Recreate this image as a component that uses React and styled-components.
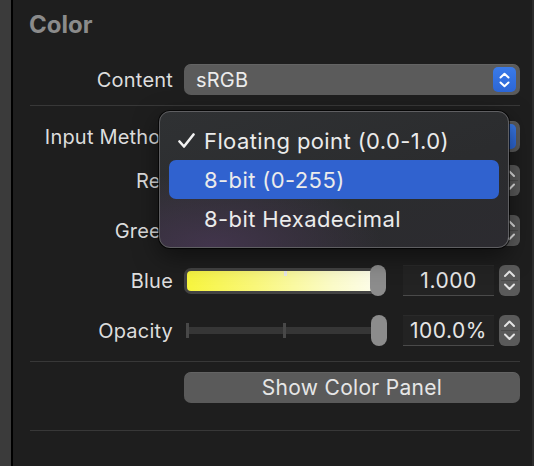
import React from "react";
import styled, { createGlobalStyle } from "styled-components";

const Global = createGlobalStyle`
  html, body { margin: 0; padding: 0; background: #1e1e1e; }
  body { font-family: Inter, "Noto Sans", "Liberation Sans", sans-serif; -webkit-font-smoothing: antialiased; }
`;

const Frame = styled.div`
  display: flex;
  width: 534px;
  height: 466px;
  overflow: hidden;
`;

const Sidebar = styled.div`
  width: 11px;
  background: #3b3b3b;
  flex: none;
`;

const Edge = styled.div`
  width: 2px;
  background: #000;
  flex: none;
`;

const Inspector = styled.div`
  position: relative;
  flex: 1;
  background: #1e1e1e;
  padding: 11px 12px 0 17px;
  border-right: 2px solid #2c2c2c;
  display: flex;
  flex-direction: column;
`;

const Heading = styled.div`
  font-size: 24px;
  line-height: 28px;
  font-weight: 700;
  color: #8b8b8b;
  margin-left: -1px;
  margin-bottom: 25px;
`;

const Row = styled.div`
  display: grid;
  grid-template-columns: 143px 1fr;
  column-gap: 11px;
  align-items: center;
  height: 31px;
  margin-top: ${(p) => p.$mt || 0}px;
`;

const Label = styled.div`
  text-align: right;
  font-size: 20px;
  letter-spacing: 0.2px;
  color: #dddddd;
  white-space: nowrap;
`;

const Popup = styled.div`
  position: relative;
  height: 31px;
  border-radius: 7px;
  background: #5b5b5b;
  box-shadow: inset 0 0.5px 0 rgba(255,255,255,0.12);
  display: flex;
  align-items: center;
  padding-left: 12px;
  font-size: 20px;
  letter-spacing: 0.2px;
  color: #ececec;
`;

const PopupArrows = styled.div`
  position: absolute;
  right: 4px;
  top: 3px;
  width: 23px;
  height: 25px;
  border-radius: 5px;
  background: linear-gradient(#3a7bea, #2c66d6);
  display: flex;
  align-items: center;
  justify-content: center;
`;

const Separator = styled.div`
  height: 1px;
  background: #383838;
  margin-top: ${(p) => p.$mt}px;
`;

const Controls = styled.div`
  display: flex;
  align-items: center;
  gap: 5px;
`;

const SliderArea = styled.div`
  position: relative;
  flex: 1;
  height: 31px;
  margin-right: 12px;
  display: flex;
  align-items: center;
`;

const ColorTrack = styled.div`
  width: calc(100% - 8px);
  height: 20px;
  border: 3px solid #434343;
  border-radius: 7px;
  background: ${(p) => p.$bg};
  position: relative;
`;

const CenterMark = styled.div`
  position: absolute;
  left: 50%;
  top: 0;
  width: 3px;
  height: 5px;
  background: #e8e8e8;
`;

const PlainTrack = styled.div`
  position: relative;
  width: calc(100% - 6px);
  height: 7px;
  background: #363636;
  margin-left: 2px;
`;

const Tick = styled.div`
  position: absolute;
  top: -4px;
  left: ${(p) => p.$left};
  width: 3px;
  height: 15px;
  background: #484848;
`;

const Knob = styled.div`
  position: absolute;
  right: ${(p) => p.$right || 0}px;
  top: 0;
  width: 16px;
  height: 31px;
  border-radius: 8px;
  background: #8c8c8c;
`;

const Field = styled.div`
  width: 91px;
  height: 31px;
  box-sizing: border-box;
  background: #232323;
  border-top: 1px solid #2a2a2a;
  border-bottom: 1px solid #4a4a4a;
  display: flex;
  align-items: center;
  justify-content: center;
  font-size: 21px;
  letter-spacing: 0.5px;
  color: #e6e6e6;
`;

const Stepper = styled.div`
  width: 21px;
  height: 31px;
  border-radius: 6px;
  background: #5a5a5a;
  display: flex;
  flex-direction: column;
  align-items: center;
  justify-content: space-evenly;
  position: relative;
  &::after {
    content: "";
    position: absolute;
    left: 2px;
    right: 2px;
    top: 15px;
    height: 1px;
    background: #4a4a4a;
  }
`;

const Button = styled.div`
  height: 31px;
  border-radius: 7px;
  background: #5a5a5a;
  box-shadow: inset 0 0.5px 0 rgba(255,255,255,0.12);
  display: flex;
  align-items: center;
  justify-content: center;
  font-size: 21px;
  letter-spacing: 0.3px;
  color: #e6e6e6;
`;

const Menu = styled.div`
  position: absolute;
  left: 146px;
  top: 111px;
  width: 350px;
  height: 137px;
  box-sizing: border-box;
  padding: 9px 9px;
  border-radius: 11px;
  border: 1px solid #5f5f62;
  box-shadow: 0 0 0 1px rgba(0,0,0,0.7), 0 8px 24px rgba(0,0,0,0.5);
  background:
    radial-gradient(ellipse 70% 80% at 15% 100%, rgba(72,55,84,0.8), rgba(72,55,84,0) 70%),
    linear-gradient(160deg, #2f3133 0%, #2b2c2e 60%, #2c2b30 100%);
  display: flex;
  flex-direction: column;
`;

const MenuItem = styled.div`
  height: 40px;
  border-radius: 7px;
  display: flex;
  align-items: center;
  padding-left: 9px;
  font-size: 22px;
  letter-spacing: 0.4px;
  color: #ebebeb;
  white-space: nowrap;
  background: ${(p) => (p.$active ? "#3062cf" : "transparent")};
`;

const CheckSlot = styled.div`
  width: 26px;
  display: flex;
  align-items: center;
`;

const Chevron = ({ dir, size = 9, color = "#e4e4e4", w = 2 }) => (
  <svg width={size + 2} height={size / 2 + 3} viewBox={`-1 -1.5 ${size + 2} ${size / 2 + 3}`}>
    <polyline
      points={dir === "up" ? `0,${size / 2} ${size / 2},0 ${size},${size / 2}` : `0,0 ${size / 2},${size / 2} ${size},0`}
      fill="none"
      stroke={color}
      strokeWidth={w}
      strokeLinecap="round"
      strokeLinejoin="round"
    />
  </svg>
);

const StepperControl = () => (
  <Stepper>
    <Chevron dir="up" />
    <Chevron dir="down" />
  </Stepper>
);

const Check = () => (
  <svg width="17" height="15" viewBox="0 0 17 15">
    <polyline points="1.5,8.5 6,13.5 15.5,1.5" fill="none" stroke="#f2f2f2" strokeWidth="2.6" strokeLinecap="round" strokeLinejoin="round" />
  </svg>
);

const sliders = [
  { name: "Red", bg: "linear-gradient(90deg, #40f8f8, #f0fdfd)", value: "1.000", mt: 13 },
  { name: "Green", bg: "linear-gradient(90deg, #f840f8, #fdf0fd)", value: "1.000", mt: 19 },
  { name: "Blue", bg: "linear-gradient(90deg, #f7f53e 0%, #f9f77a 35%, #fbfbc8 75%, #fdfdef 100%)", value: "1.000", mt: 19, mark: true },
];

export default function App() {
  return (
    <>
      <Global />
      <Frame>
        <Sidebar />
        <Edge />
        <Inspector>
          <Heading>Color</Heading>
          <Row>
            <Label>Content</Label>
            <Popup>
              sRGB
              <PopupArrows>
                <svg width="11" height="16" viewBox="0 0 11 16">
                  <polyline points="1.5,5.5 5.5,1.8 9.5,5.5" fill="none" stroke="#fff" strokeWidth="2" strokeLinecap="round" strokeLinejoin="round" />
                  <polyline points="1.5,10.5 5.5,14.2 9.5,10.5" fill="none" stroke="#fff" strokeWidth="2" strokeLinecap="round" strokeLinejoin="round" />
                </svg>
              </PopupArrows>
            </Popup>
          </Row>
          <Separator $mt={10} />
          <Row $mt={15}>
            <Label>Input Method</Label>
            <Popup>
              <PopupArrows />
            </Popup>
          </Row>
          {sliders.map((s) => (
            <Row key={s.name} $mt={s.mt}>
              <Label>{s.name}</Label>
              <Controls>
                <SliderArea>
                  <ColorTrack $bg={s.bg}>{s.mark && <CenterMark />}</ColorTrack>
                  <Knob />
                </SliderArea>
                <Field>{s.value}</Field>
                <StepperControl />
              </Controls>
            </Row>
          ))}
          <Row $mt={19}>
            <Label>Opacity</Label>
            <Controls>
              <SliderArea>
                <PlainTrack>
                  <Tick $left="0px" />
                  <Tick $left="calc(50% - 1px)" />
                </PlainTrack>
                <Knob $right={-1} />
              </SliderArea>
              <Field>100.0%</Field>
              <StepperControl />
            </Controls>
          </Row>
          <Separator $mt={15} />
          <Row $mt={10}>
            <span />
            <Button>Show Color Panel</Button>
          </Row>
          <Separator $mt={27} />

          <Menu>
            <MenuItem>
              <CheckSlot>
                <Check />
              </CheckSlot>
              Floating point (0.0-1.0)
            </MenuItem>
            <MenuItem $active>
              <CheckSlot />
              8-bit (0-255)
            </MenuItem>
            <MenuItem>
              <CheckSlot />
              8-bit Hexadecimal
            </MenuItem>
          </Menu>
        </Inspector>
      </Frame>
    </>
  );
}
